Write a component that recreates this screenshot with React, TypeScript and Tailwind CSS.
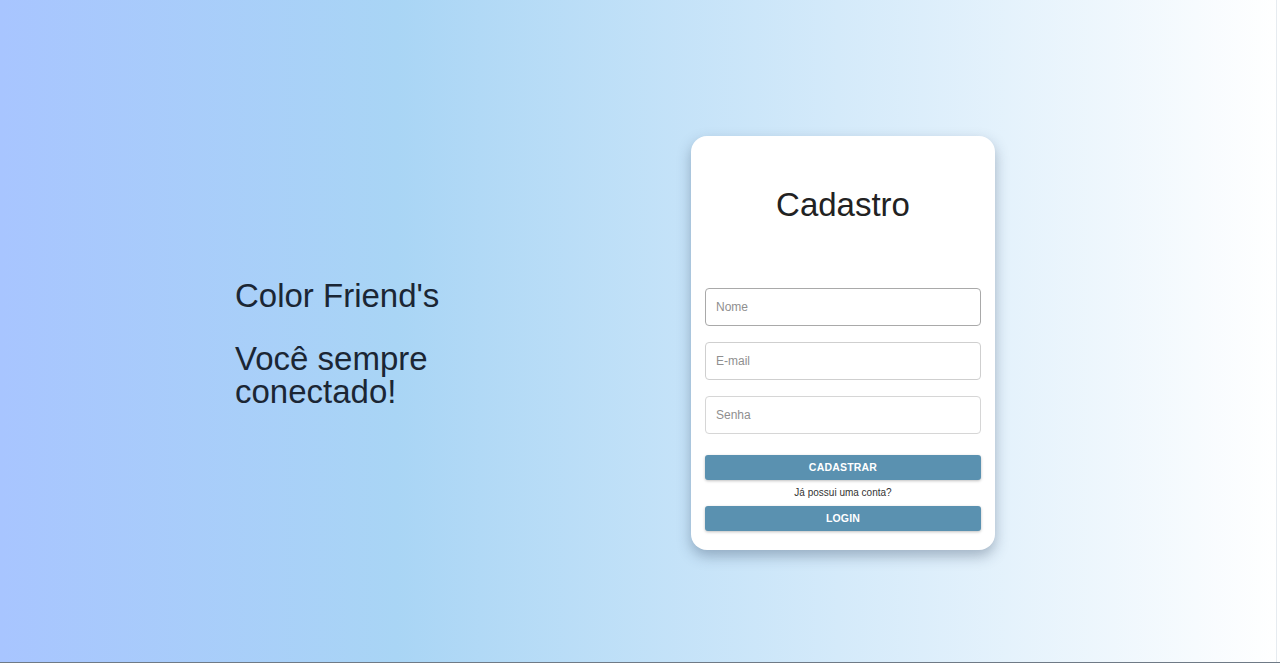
export default function App() {
  return (
    <div className="flex h-[663px] w-full border-b border-[#6f7a86] font-['Liberation_Sans',Arial,sans-serif] bg-[linear-gradient(90deg,#a8c5ff_0%,#a9d5f5_31%,#ffffff_100%)]">
      <main className="flex flex-1 items-center pl-[235px] pt-[24px]">
        <div className="w-[456px]">
          <div className="flex w-[220px] flex-col gap-[30px] text-[33px] leading-[33px] text-[#1b2634]">
            <h1>Color Friend&apos;s</h1>
            <h2>Você sempre conectado!</h2>
          </div>
        </div>

        <div className="w-[304px] rounded-[16px] bg-white px-[14px] pt-[50px] pb-[19px] shadow-[0_6px_14px_rgba(40,60,90,0.35)]">
          <h1 className="mb-[64px] text-center text-[33px] leading-[38px] text-[#222]">Cadastro</h1>

          <form className="flex flex-col" onSubmit={(e) => e.preventDefault()}>
            <div className="flex flex-col gap-[16px]">
              <input
                placeholder="Nome"
                className="h-[38px] w-full rounded-[4px] border border-[#a9a9a9] px-[10px] text-[12px] text-[#333] placeholder:text-[#8f8f8f] outline-none"
              />
              <input
                placeholder="E-mail"
                className="h-[38px] w-full rounded-[4px] border border-[#cfcfcf] px-[10px] text-[12px] text-[#333] placeholder:text-[#8f8f8f] outline-none"
              />
              <input
                type="password"
                placeholder="Senha"
                className="h-[38px] w-full rounded-[4px] border border-[#d6d6d6] px-[10px] text-[12px] text-[#333] placeholder:text-[#8f8f8f] outline-none"
              />
            </div>

            <button
              type="submit"
              className="mt-[21px] h-[25px] w-full rounded-[3px] bg-[#5a91b0] text-[10.5px] font-bold tracking-[0.2px] text-white shadow-[0_1px_3px_rgba(0,0,0,0.25)]"
            >
              CADASTRAR
            </button>
            <p className="text-center text-[10px] leading-[26px] text-[#333]">Já possui uma conta?</p>
            <button
              type="button"
              className="h-[25px] w-full rounded-[3px] bg-[#5a91b0] text-[10.5px] font-bold tracking-[0.2px] text-white shadow-[0_1px_3px_rgba(0,0,0,0.25)]"
            >
              LOGIN
            </button>
          </form>
        </div>
      </main>
      <div className="w-[4px] border-l border-[#e6ebf0] bg-white" />
    </div>
  );
}
